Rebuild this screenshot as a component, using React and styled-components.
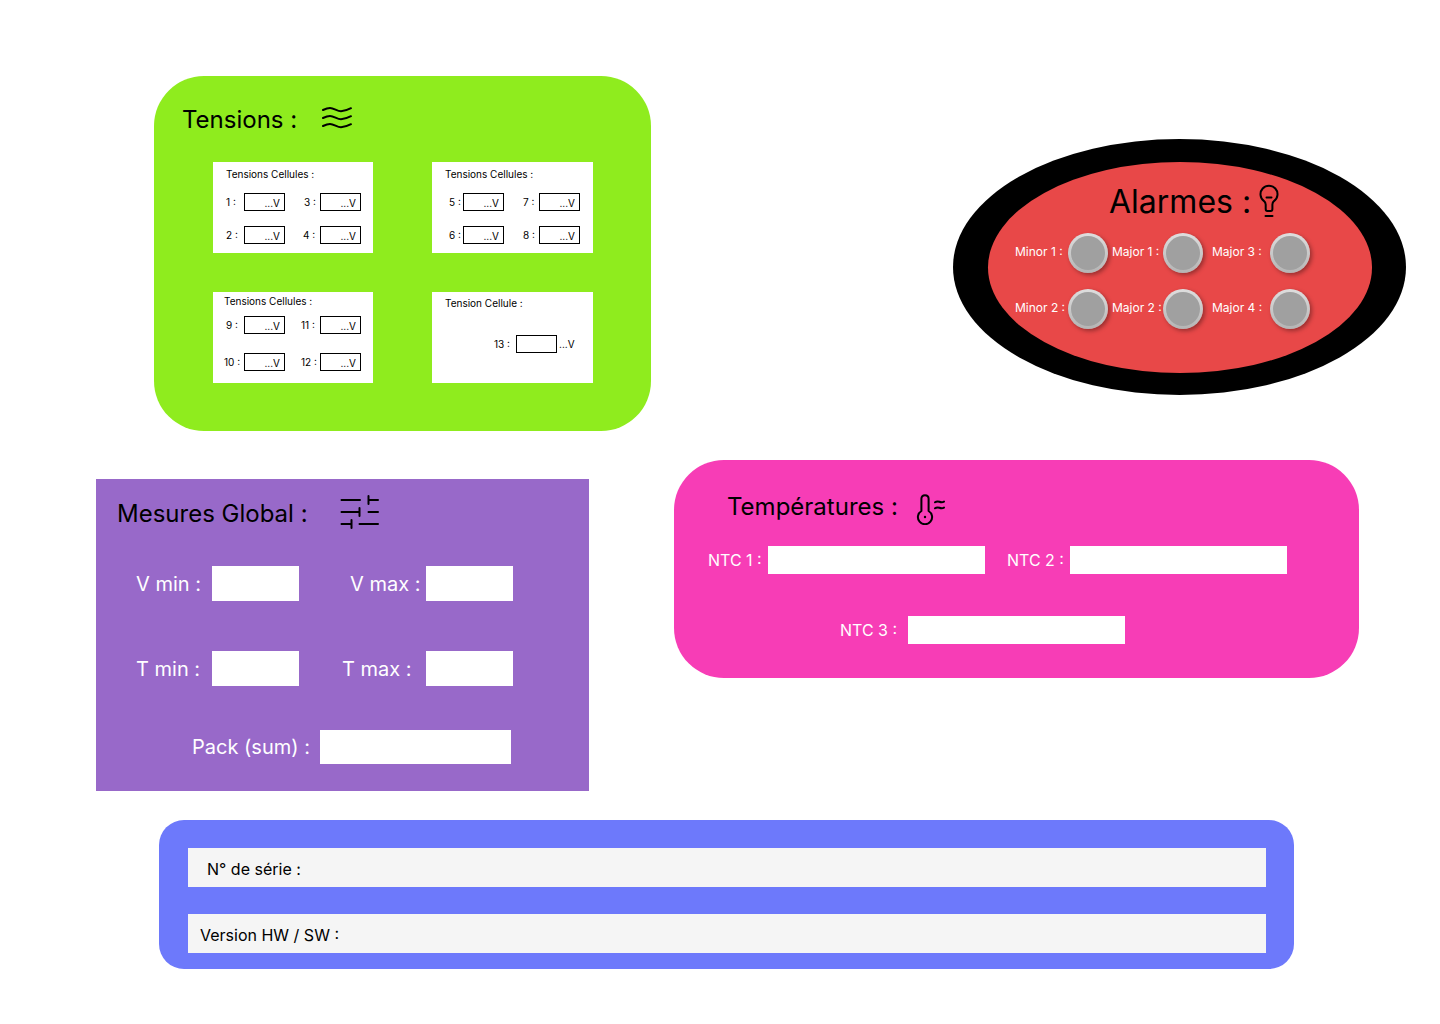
import React, { useId } from "react";
import styled, { createGlobalStyle } from "styled-components";

const GlobalStyle = createGlobalStyle`
  *, *::before, *::after { box-sizing: border-box; }
  body {
    margin: 0;
    background: #ffffff;
    color: #000000;
    font-family: Inter, "Liberation Sans", sans-serif;
  }
  input, button { font: inherit; color: inherit; }
`;

/* Page */

const Page = styled.main`
  display: flex;
  flex-direction: column;
  gap: 29px;
  padding: 76px 0 55px;
`;

const TopRow = styled.div`
  display: flex;
  align-items: flex-start;
  justify-content: space-between;
  padding: 0 34px 0 154px;
`;

const MiddleRow = styled.div`
  display: grid;
  grid-template-columns: 493fr 685fr;
  align-items: start;
  gap: 85px;
  padding: 0 81px 0 96px;
`;

const PanelHeader = styled.header`
  display: flex;
  align-items: ${(p) => p.$align || "flex-start"};
  gap: ${(p) => p.$gap}px;
`;

const Title = styled.h2`
  margin: 0;
  font-size: ${(p) => (p.$large ? 32 : 24)}px;
  line-height: ${(p) => (p.$large ? 40 : 30)}px;
  font-weight: 400;
  white-space: nowrap;
`;

const Icon = styled.svg`
  flex: none;
  display: block;
  fill: none;
  stroke: #000000;
  stroke-width: 2;
  stroke-linecap: round;
  stroke-linejoin: round;
`;

/* Tensions */

const TensionsPanel = styled.section`
  flex: 0 1 497px;
  padding: 29px 58px 48px 59px;
  border-radius: 50px;
  background: #8fec1e;

  ${PanelHeader} {
    margin: 0 0 27px -31px;
  }
`;

const CardGrid = styled.div`
  display: grid;
  grid-template-columns: 160fr 161fr;
  gap: 39px 59px;
`;

const Card = styled.section`
  min-height: 91px;
  padding: ${(p) => p.$top}px 0 9px 11px;
  background: #ffffff;
  font-size: 10px;
  line-height: 12px;
`;

const CardTitle = styled.h3`
  margin: 0;
  padding-left: ${(p) => p.$indent}px;
  font: inherit;
`;

const CellGrid = styled.div`
  display: grid;
  grid-template-columns: 61px 61px;
  gap: ${(p) => (p.$compact ? 19 : 15)}px 15px;
  padding-top: ${(p) => (p.$compact ? 9 : 13)}px;
`;

const SingleCell = styled.div`
  display: flex;
  align-items: center;
  gap: 2px;
  padding: 26px 0 0 48px;
`;

const CellField = styled.div`
  display: flex;
  align-items: center;
  width: ${(p) => (p.$wide ? 66 : 61)}px;
`;

const CellLabel = styled.label`
  flex: 1;
  padding-left: ${(p) => p.$indent}px;
  white-space: nowrap;
`;

const CellInput = styled.input`
  flex: none;
  width: 41px;
  height: 18px;
  padding: 1px 4px 0 0;
  border: 1px solid #000000;
  border-radius: 0;
  background: #ffffff;
  text-align: right;
`;

/* Alarmes */

const AlarmBezel = styled.section`
  flex: none;
  margin-top: 63px;
  padding: 23px 34px 22px 35px;
  border-radius: 50%;
  background: #000000;
`;

const AlarmFace = styled.div`
  width: 384px;
  padding: 20px 27px 44px;
  border-radius: 50%;
  background: #e84848;

  ${PanelHeader} {
    padding-left: 94px;
  }
`;

const AlarmGrid = styled.div`
  display: grid;
  grid-template-columns: 97px 100px 98px;
  row-gap: 16px;
  padding-top: 11px;
`;

const AlarmItem = styled.div`
  display: flex;
  align-items: center;
`;

const AlarmLabel = styled.label`
  flex: none;
  width: ${(p) => p.$width}px;
  padding-bottom: 3px;
  color: #ffffff;
  font-size: 12px;
  line-height: 15px;
  white-space: nowrap;
`;

const Lamp = styled.button`
  flex: none;
  width: 40px;
  height: 40px;
  padding: 0;
  border: 3px solid transparent;
  border-radius: 50%;
  background:
    linear-gradient(#a0a0a0, #a0a0a0) padding-box,
    linear-gradient(#dedede, #b4b4b4) border-box;
  box-shadow: 2px 2px 4px rgba(0, 0, 0, 0.35);
`;

/* Mesures and températures */

const MeasuresPanel = styled.section`
  margin-top: 19px;
  padding: 16px 20px 27px 21px;
  background: #9869c9;
  color: #ffffff;
  font-size: 20px;
  line-height: 24px;

  ${Title} {
    color: #000000;
  }
`;

const MeasureGrid = styled.div`
  display: grid;
  grid-template-columns: 163px 171px;
  gap: 50px 43px;
  padding: 37px 0 44px 19px;
`;

const TemperaturePanel = styled.section`
  padding: 32px 34px 34px;
  border-radius: 50px;
  background: #f73db6;
  color: #ffffff;
  font-size: 16px;
  line-height: 20px;

  ${PanelHeader} {
    padding-left: 19px;
  }

  ${Title} {
    color: #000000;
  }
`;

const ProbeRow = styled.div`
  display: flex;
  gap: 22px;
  padding: ${(p) => (p.$second ? "42px 0 0 132px" : "21px 0 0")};
`;

const Field = styled.div`
  display: flex;
  align-items: center;
  padding-left: ${(p) => p.$indent || 0}px;
`;

const FieldLabel = styled.label`
  flex: none;
  width: ${(p) => p.$width}px;
  white-space: nowrap;
`;

const FieldInput = styled.input`
  flex: none;
  width: ${(p) => p.$width}px;
  height: ${(p) => p.$height}px;
  padding: 0 8px;
  border: 0;
  border-radius: 0;
  background: #ffffff;
  color: #000000;
`;

/* Identification */

const InfoPanel = styled.section`
  display: flex;
  flex-direction: column;
  gap: 27px;
  margin: 0 146px 0 159px;
  padding: 28px 28px 16px 29px;
  border-radius: 25px;
  background: #6d79fb;
`;

const InfoBar = styled.div`
  display: flex;
  align-items: center;
  gap: 8px;
  height: 39px;
  padding: 2px 12px 0 ${(p) => p.$indent}px;
  background: #f5f5f5;
  font-size: 16px;
  line-height: 20px;
`;

const InfoInput = styled.input`
  flex: 1;
  min-width: 0;
  padding: 0;
  border: 0;
  background: transparent;
`;

const WavesIcon = () => (
  <Icon width="32" height="25" viewBox="0 0 32 25" aria-hidden="true">
    {[1, 9, 17].map((y) => (
      <path
        key={y}
        transform={`translate(0 ${y})`}
        d="M2 4C5 2.6 7 2 9 2C13 2 16 5.200 20 5.200C23.500 5.200 27 3.800 30 2.200"
      />
    ))}
  </Icon>
);

const BulbIcon = () => (
  <Icon width="20" height="36" viewBox="0 -2 20 36" aria-hidden="true">
    <path d="M6.700 20.500Q6.500 18.500 5 17.100A8.500 8.500 0 1 1 15 17.100Q13.500 18.500 13.400 20.500V25Q13.400 27 11.800 27H8.300Q6.700 27 6.700 25Z" />
    <path d="M7.500 13.500H12.500M6.500 32H13.500" />
  </Icon>
);

const SlidersIcon = () => (
  <Icon width="39" height="34" viewBox="0 0 39 34" aria-hidden="true">
    <path d="M1.500 5H20M28.500 1V9M28.500 5H38M1.500 17H19.500M19.500 13V21M28.500 17H38M1.500 29H11.500M11.500 25V33M19.500 29H38" />
  </Icon>
);

const ThermometerIcon = () => (
  <Icon width="30" height="33" viewBox="0 0 30 33" aria-hidden="true">
    <path d="M5.400 19V6.800Q5.400 3.200 9 3.200Q12.600 3.200 12.600 6.800V19A7.100 7.100 0 1 1 5.400 19Z" />
    <path d="M19 10.300Q21 8.800 23.500 9.800T28 9.600M19 16.300Q21 14.800 23.500 15.800T28 15.600" />
    <circle cx="9" cy="25" r="1.200" fill="#000000" stroke="none" />
  </Icon>
);

const cards = [
  {
    title: "Tensions Cellules :",
    indent: 2,
    cells: [[1, 2], [3, 4], [2, 2], [4, 3]],
  },
  {
    title: "Tensions Cellules :",
    indent: 2,
    cells: [[5, 6], [7, 4], [6, 6], [8, 4]],
  },
  {
    title: "Tensions Cellules :",
    indent: 0,
    compact: true,
    cells: [[9, 2], [11, 1], [10, 0], [12, 1]],
  },
];

const alarms = [
  ["Minor 1 :", 53],
  ["Major 1 :", 51],
  ["Major 3 :", 58],
  ["Minor 2 :", 53],
  ["Major 2 :", 51],
  ["Major 4 :", 58],
];

function Cell({ number, indent }) {
  const id = useId();
  return (
    <CellField>
      <CellLabel htmlFor={id} $indent={indent}>{number} :</CellLabel>
      <CellInput id={id} defaultValue="...V" />
    </CellField>
  );
}

function LabelledField({ label, labelWidth, width, height, indent }) {
  const id = useId();
  return (
    <Field $indent={indent}>
      <FieldLabel htmlFor={id} $width={labelWidth}>{label}</FieldLabel>
      <FieldInput id={id} $width={width} $height={height} />
    </Field>
  );
}

function Alarm({ label, labelWidth }) {
  const id = useId();
  return (
    <AlarmItem>
      <AlarmLabel htmlFor={id} $width={labelWidth}>{label}</AlarmLabel>
      <Lamp id={id} type="button" />
    </AlarmItem>
  );
}

export default function App() {
  return (
    <>
      <GlobalStyle />
      <Page>
        <TopRow>
          <TensionsPanel>
            <PanelHeader $gap={24}>
              <Title>Tensions :</Title>
              <WavesIcon />
            </PanelHeader>
            <CardGrid>
              {cards.map((card) => (
                <Card key={card.cells[0][0]} $top={card.compact ? 3 : 6}>
                  <CardTitle $indent={card.indent}>{card.title}</CardTitle>
                  <CellGrid $compact={card.compact}>
                    {card.cells.map(([number, indent]) => (
                      <Cell key={number} number={number} indent={indent} />
                    ))}
                  </CellGrid>
                </Card>
              ))}
              <Card $top={5}>
                <CardTitle $indent={2}>Tension Cellule :</CardTitle>
                <SingleCell>
                  <CellField $wide>
                    <CellLabel htmlFor="cell-13" $indent={3}>13 :</CellLabel>
                    <CellInput id="cell-13" />
                  </CellField>
                  <span>...V</span>
                </SingleCell>
              </Card>
            </CardGrid>
          </TensionsPanel>

          <AlarmBezel>
            <AlarmFace>
              <PanelHeader $gap={8}>
                <Title $large>Alarmes :</Title>
                <BulbIcon />
              </PanelHeader>
              <AlarmGrid>
                {alarms.map(([label, width]) => (
                  <Alarm key={label} label={label} labelWidth={width} />
                ))}
              </AlarmGrid>
            </AlarmFace>
          </AlarmBezel>
        </TopRow>

        <MiddleRow>
          <MeasuresPanel>
            <PanelHeader $gap={32} $align="flex-end">
              <Title>Mesures Global :</Title>
              <SlidersIcon />
            </PanelHeader>
            <MeasureGrid>
              <LabelledField label="V min :" labelWidth={76} width={87} height={35} />
              <LabelledField label="V max :" labelWidth={76} width={87} height={35} indent={8} />
              <LabelledField label="T min :" labelWidth={76} width={87} height={35} />
              <LabelledField label="T max :" labelWidth={84} width={87} height={35} />
            </MeasureGrid>
            <LabelledField label="Pack (sum) :" labelWidth={128} width={191} height={34} indent={75} />
          </MeasuresPanel>

          <TemperaturePanel>
            <PanelHeader $gap={18}>
              <Title>Températures :</Title>
              <ThermometerIcon />
            </PanelHeader>
            <ProbeRow>
              <LabelledField label="NTC 1 :" labelWidth={60} width={217} height={28} />
              <LabelledField label="NTC 2 :" labelWidth={63} width={217} height={28} />
            </ProbeRow>
            <ProbeRow $second>
              <LabelledField label="NTC 3 :" labelWidth={68} width={217} height={28} />
            </ProbeRow>
          </TemperaturePanel>
        </MiddleRow>

        <InfoPanel>
          <InfoBar $indent={19}>
            <label htmlFor="serial">N° de série :</label>
            <InfoInput id="serial" />
          </InfoBar>
          <InfoBar $indent={12}>
            <label htmlFor="version">Version HW / SW :</label>
            <InfoInput id="version" />
          </InfoBar>
        </InfoPanel>
      </Page>
    </>
  );
}
